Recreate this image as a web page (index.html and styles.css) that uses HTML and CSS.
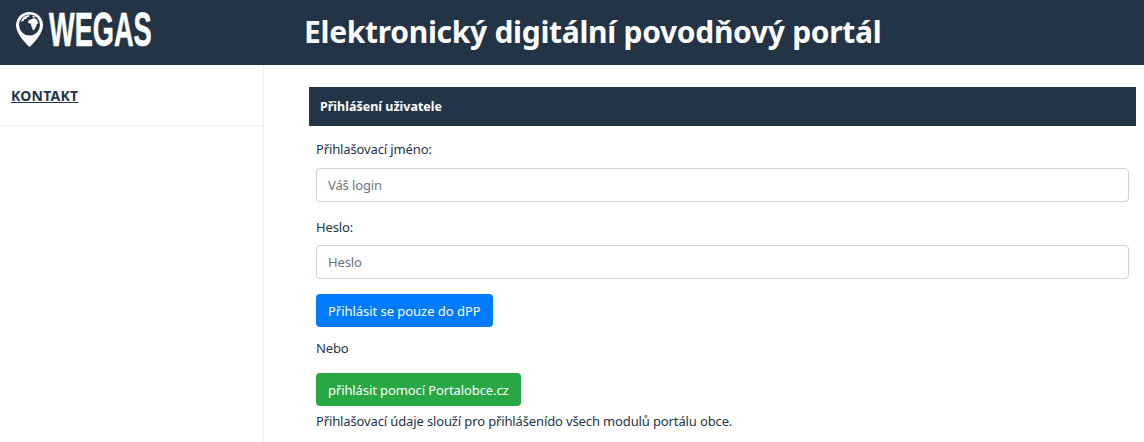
FILE: index.html
```html
<!DOCTYPE html>
<html lang="cs">
<head>
    <meta charset="UTF-8">
    <title>Elektronický digitální povodňový portál</title>
    <link rel="stylesheet" href="styles.css">
</head>
<body>
    <header class="top-bar">
        <div class="logo">
            <svg class="logo-pin" viewBox="0 0 27 35" width="27" height="35">
                <path fill="#fff" d="M13.500 0C6 0 0 5.900 0 13.200 0 21 8.700 30.500 13.500 35 18.300 30.500 27 21 27 13.200 27 5.900 21 0 13.500 0z"/>
                <circle cx="13.500" cy="13" r="10.500" fill="#233446"/>
                <path fill="#fff" d="M8.500 4.500c1.700-1 3.500-1.400 5.300-1.300l-.8 1.600-2 .4-.6 1.500-1.900.5-1 1.800-2.600.6c.6-2 1.800-3.700 3.600-5.100zM14.500 7.800l2.600-1.600 2.600.6 1.800 1.900.9 2.700-1.600.4-.6 2.400-1.700 3.200-1.600 1.200-.8-3.200-1.100-2.100.2-1.700-2.200-.2-1-1.500.9-2zM16 3.800l2.500.5 1 1.300-2.500-.2z"/>
            </svg>
            <span class="logo-text">WEGAS</span>
        </div>
        <h1 class="site-title">Elektronický digitální povodňový portál</h1>
    </header>

    <div class="page">
        <aside class="sidebar">
            <div class="side-item"><a href="#">KONTAKT</a></div>
        </aside>

        <main class="content">
            <div class="panel-head">Přihlášení uživatele</div>
            <form class="login-form">
                <div class="field">
                    <label for="login">Přihlašovací jméno:</label>
                    <input id="login" type="text" placeholder="Váš login">
                </div>
                <div class="field">
                    <label for="heslo">Heslo:</label>
                    <input id="heslo" type="text" placeholder="Heslo">
                </div>
                <button class="btn btn-blue" type="button">Přihlásit se pouze do dPP</button>
                <p class="nebo">Nebo</p>
                <button class="btn btn-green" type="button">přihlásit pomocí Portalobce.cz</button>
                <p class="note">Přihlašovací údaje slouží pro přihlášenído všech modulů portálu obce.</p>
            </form>
        </main>
    </div>
</body>
</html>
```

FILE: styles.css
```css
html, body {
    height: 100%;
}
body {
    margin: 0;
    font-family: "Noto Sans", sans-serif;
    font-size: 14px;
    color: #233446;
    background: white;
    overflow: hidden;
}
.top-bar {
    display: flex;
    align-items: center;
    height: 65px;
    background: #233446;
    color: white;
}
.logo {
    display: flex;
    align-items: center;
    gap: 6px;
    width: 304px;
    padding: 0 0 7px 16px;
    box-sizing: border-box;
}
.logo-text {
    width: 103px;
    font-family: "Liberation Sans", sans-serif;
    font-size: 49px;
    font-weight: bold;
    line-height: 1;
    -webkit-text-stroke: 0.6px white;
    transform: scaleX(0.555);
    transform-origin: left center;
}
.site-title {
    margin: 0;
    padding-bottom: 3px;
    font-size: 30px;
    font-weight: 700;
    letter-spacing: -0.3px;
}
.page {
    display: flex;
    height: calc(100% - 65px);
}
.sidebar {
    width: 264px;
    box-sizing: border-box;
    border-right: 1px solid #eee;
}
.side-item {
    height: 61px;
    padding: 21px 11px 0;
    box-sizing: border-box;
    border-bottom: 1px solid #eee;
    font-weight: 700;
    letter-spacing: 0.25px;
}
.side-item a {
    color: #233446;
}
.content {
    flex: 1;
    padding: 22px 8px 0 45px;
}
.panel-head {
    height: 39px;
    line-height: 39px;
    padding-left: 11px;
    background: #233446;
    color: white;
    font-size: 12.500px;
    font-weight: 700;
}
.login-form {
    padding: 13px 7px 0;
    letter-spacing: -0.13px;
}
.field {
    margin-bottom: 15px;
}
.field label {
    display: block;
    margin-bottom: 7px;
    line-height: 21px;
    font-size: 13px;
}
.field:first-child label {
    margin-bottom: 8px;
}
.field input {
    display: block;
    width: 100%;
    height: 34px;
    padding: 0 11px;
    box-sizing: border-box;
    border: 1px solid #ced4da;
    border-radius: 4px;
    font: inherit;
    font-size: 13px;
    letter-spacing: inherit;
}
.field input::placeholder {
    color: #6c757d;
}
.btn {
    display: block;
    height: 33px;
    padding: 0 12px;
    border: none;
    border-radius: 4px;
    color: white;
    font: inherit;
    font-size: 13px;
    letter-spacing: -0.04px;
}
.btn-blue { background: #007bff; }
.btn-green { background: #28a745; letter-spacing: -0.1px; }
.nebo {
    margin: 11px 0 14px;
    line-height: 21px;
    font-size: 13px;
}
.note {
    margin: 5px 0 0;
    line-height: 21px;
    font-size: 13px;
}
```
